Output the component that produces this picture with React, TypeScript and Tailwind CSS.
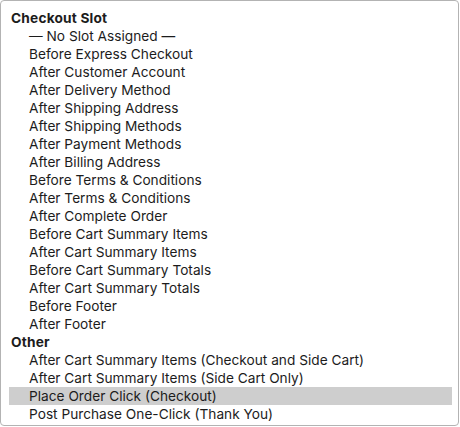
import React from "react";

const groups: { label: string; items: string[] }[] = [
  {
    label: "Checkout Slot",
    items: [
      "— No Slot Assigned —",
      "Before Express Checkout",
      "After Customer Account",
      "After Delivery Method",
      "After Shipping Address",
      "After Shipping Methods",
      "After Payment Methods",
      "After Billing Address",
      "Before Terms & Conditions",
      "After Terms & Conditions",
      "After Complete Order",
      "Before Cart Summary Items",
      "After Cart Summary Items",
      "Before Cart Summary Totals",
      "After Cart Summary Totals",
      "Before Footer",
      "After Footer",
    ],
  },
  {
    label: "Other",
    items: [
      "After Cart Summary Items (Checkout and Side Cart)",
      "After Cart Summary Items (Side Cart Only)",
      "Place Order Click (Checkout)",
      "Post Purchase One-Click (Thank You)",
    ],
  },
];

export default function App() {
  return (
    <div className="w-[460px] h-[427px] bg-white" style={{ fontFamily: "Inter, 'Liberation Sans', sans-serif" }}>
      <div className="w-[459px] h-[426px] border border-[#b3b3b3] rounded-[4px] pt-[8px] pl-[8px] pr-[6px] text-[13.7px] text-[#1c1c1c]">
        {groups.map((g) => (
          <div key={g.label}>
            <div className="h-[18px] leading-[18px] pl-[2px] font-bold tracking-[0.2px]">{g.label}</div>
            {g.items.map((it) => (
              <div
                key={it}
                className={`h-[18px] leading-[18px] pl-[20px] whitespace-nowrap ${
                  it === "Place Order Click (Checkout)" ? "bg-[#cecece]" : ""
                }`}
              >
                {it}
              </div>
            ))}
          </div>
        ))}
      </div>
    </div>
  );
}
